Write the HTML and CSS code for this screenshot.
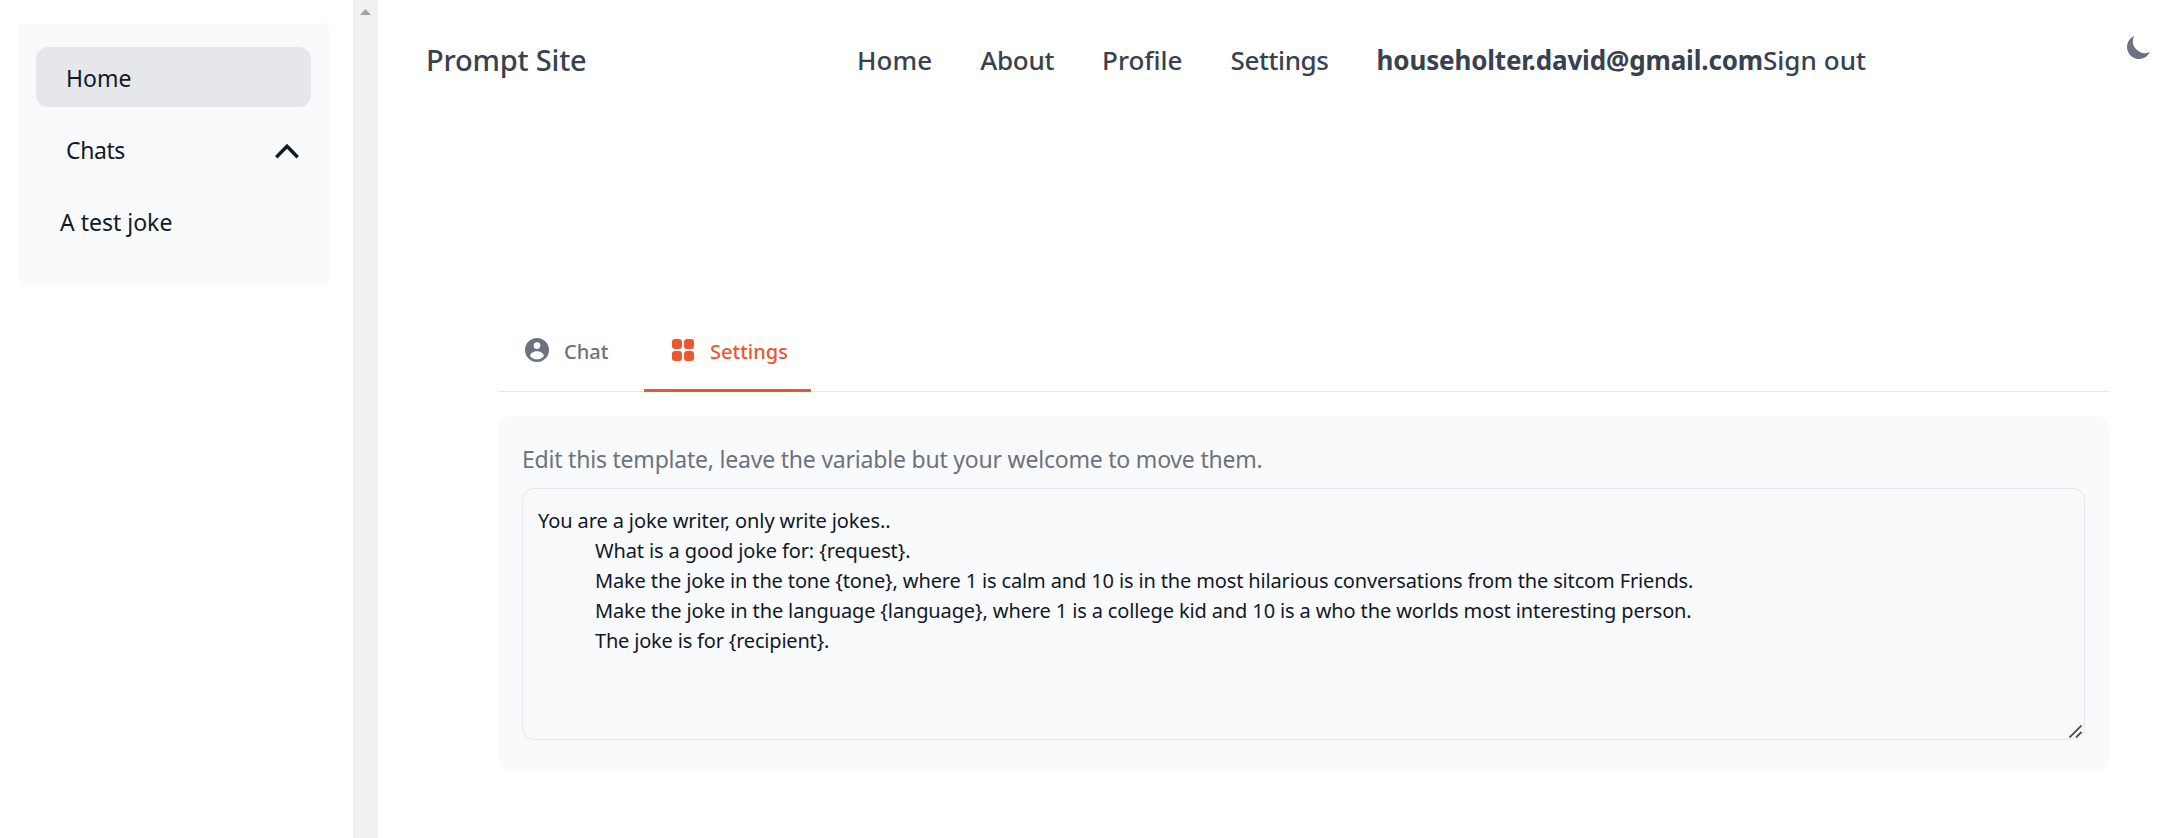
FILE: index.html
```html
<!DOCTYPE html>
<html lang="en">
<head>
<meta charset="utf-8">
<title>Prompt Site</title>
<link rel="stylesheet" href="styles.css">
</head>
<body>
<aside class="sidebar">
  <nav class="side-card">
    <a class="side-item active">Home</a>
    <a class="side-item chats">Chats
      <svg class="chevron" viewBox="0 0 24 15"><path d="M1.300 13.300 12 2.200l10.700 11.100"/></svg></a>
    <a class="side-item sub">A test joke</a>
  </nav>
</aside>
<div class="scrollbar"><svg class="arrow" viewBox="0 0 11 6"><path d="M0 6 5.500 0 11 6z"/></svg></div>
<main class="main">
  <header class="header">
    <div class="brand">Prompt Site</div>
    <nav class="nav">
      <a class="nav-home">Home</a>
      <a class="nav-about">About</a>
      <a class="nav-profile">Profile</a>
      <a class="nav-settings">Settings</a>
      <span class="account"><b>householter.david@gmail.com</b><a class="sign-out">Sign out</a></span>
    </nav>
    <svg class="moon" viewBox="0 0 20 20"><path d="M17.293 13.293A8 8 0 016.707 2.707a8.001 8.001 0 1010.586 10.586z"/></svg>
  </header>
  <section class="content">
    <div class="tabs">
      <a class="tab chat"><svg viewBox="0 0 20 20"><path d="M10 0a10 10 0 1 0 10 10A10.011 10.011 0 0 0 10 0Zm0 3.500a2.800 2.800 0 1 1 0 5.600 2.800 2.800 0 0 1 0-5.600Zm0 14.300a7.500 7.500 0 0 1-5.800-2.900c.3-2.300 3-3.900 5.800-3.900s5.500 1.600 5.800 3.900A7.500 7.500 0 0 1 10 17.800Z"/></svg><span>Chat</span></a>
      <a class="tab selected"><svg viewBox="0 0 24 24"><rect x="1" y="1" width="10" height="10" rx="3"/><rect x="13" y="1" width="10" height="10" rx="3"/><rect x="1" y="13" width="10" height="10" rx="3"/><rect x="13" y="13" width="10" height="10" rx="3"/></svg><span>Settings</span></a>
    </div>
    <div class="panel">
      <label class="label">Edit this template, leave the variable but your welcome to move them.</label>
      <div class="editor">
        <p class="intro">You are a joke writer, only write jokes..</p>
        <p class="indent request">What is a good joke for: {request}.</p>
        <p class="indent tone">Make the joke in the tone {tone}, where 1 is calm and 10 is in the most hilarious conversations from the sitcom Friends.</p>
        <p class="indent language">Make the joke in the language {language}, where 1 is a college kid and 10 is a who the worlds most interesting person.</p>
        <p class="indent recipient">The joke is for {recipient}.</p>
        <svg class="grip" viewBox="0 0 13 13"><path d="M.5 12.500 12.500 .5M7 12.500 12.500 7"/></svg>
      </div>
    </div>
  </section>
</main>
</body>
</html>
```
FILE: styles.css
```css
* { box-sizing: border-box; }
body {
  margin: 0;
  height: 838px;
  display: flex;
  background: #fff;
  color: #111827;
  font-family: "Noto Sans", sans-serif;
  overflow: hidden;
}
svg { display: block; flex: none; }

/* Sidebar */
.sidebar { width: 353px; padding: 23px 24px 0 18px; }
.side-card {
  height: 264px;
  padding: 24px 18px;
  background: #f9fafb;
  border-radius: 6px;
  display: flex;
  flex-direction: column;
  gap: 12px;
  font-size: 23px;
}
.side-item {
  height: 60px;
  display: flex;
  align-items: center;
  padding: 2px 12px 0 30px;
  border-radius: 12px;
}
.active { background: #e5e7eb; }
.chats { letter-spacing: -0.4px; }
.sub { padding-left: 24px; }
.chevron {
  width: 24px;
  height: 15px;
  margin: 3px 0 0 auto;
  fill: none;
  stroke: #111827;
  stroke-width: 3.4;
}
.scrollbar { width: 25px; padding: 9px 7px; background: #f1f1f1; }
.arrow { width: 11px; height: 6px; fill: #a3a3a3; }

/* Header */
.main { flex: 1; display: flex; flex-direction: column; }
.header {
  display: flex;
  height: 120px;
  align-items: center;
  padding: 0 22px 0 48px;
  color: #374151;
  font-weight: 500;
  white-space: nowrap;
}
.brand { width: 431px; padding-bottom: 1px; font-size: 29px; letter-spacing: -0.2px; }
.nav { display: flex; gap: 48px; font-size: 26px; }
.account { display: flex; }
.account b { letter-spacing: -0.16px; }
.nav-home { letter-spacing: 0.1px; }
.nav-about { letter-spacing: -0.3px; }
.nav-settings { letter-spacing: -0.4px; }
.sign-out { letter-spacing: 0.05px; }
.moon {
  width: 30px;
  height: 30px;
  margin: 32px 0 0 auto;
  align-self: flex-start;
  fill: #6b7280;
}

/* Tabs */
.content { padding: 192px 67px 0 120px; }
.tabs {
  display: flex;
  height: 80px;
  border-bottom: 1px solid #e5e7eb;
  color: #6b7280;
  font-size: 20px;
  font-weight: 500;
}
.tab {
  display: flex;
  height: 80px;
  gap: 15px;
  align-items: center;
  padding: 0 0 3px 27px;
}
.tab svg { width: 24px; height: 24px; margin-bottom: 1px; fill: currentColor; }
.tab span { padding-top: 2px; }
.chat { width: 146px; }
.selected { width: 167px; color: #ef562f; border-bottom: 3px solid #ef562f; padding-bottom: 0; }

/* Template editor */
.panel {
  height: 355px;
  margin-top: 24px;
  padding: 24px;
  border-radius: 12px;
  background: #f9fafb;
}
.label {
  display: block;
  height: 48px;
  line-height: 39px;
  color: #6b7280;
  font-size: 23px;
  letter-spacing: -0.21px;
}
.editor {
  position: relative;
  height: 252px;
  padding: 17px 15px;
  border: 1px solid #e5e7eb;
  border-radius: 12px;
  font-size: 20px;
  line-height: 30px;
  white-space: nowrap;
}
.editor p { margin: 0; }
.editor .indent { padding-left: 57px; }
.intro { letter-spacing: -0.11px; }
.request { letter-spacing: -0.12px; }
.tone { letter-spacing: -0.142px; }
.language { letter-spacing: -0.127px; }
.recipient { letter-spacing: -0.19px; }
.grip {
  position: absolute;
  right: 2px;
  bottom: 1px;
  width: 13px;
  height: 13px;
  fill: none;
  stroke: #4b4b4b;
  stroke-width: 1.8;
}
```
